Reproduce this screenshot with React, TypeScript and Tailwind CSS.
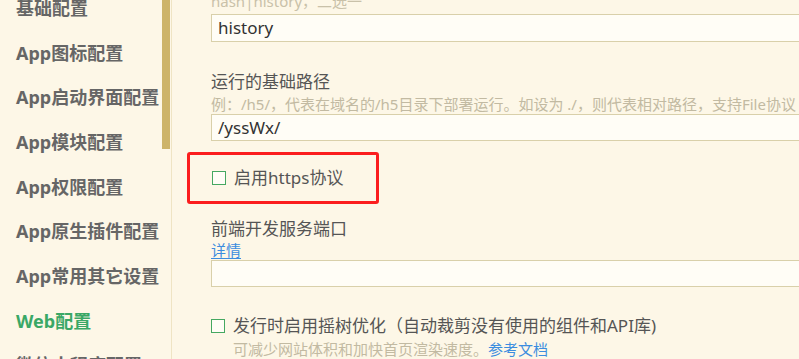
const menu = [
  '基础配置',
  'App图标配置',
  'App启动界面配置',
  'App模块配置',
  'App权限配置',
  'App原生插件配置',
  'App常用其它设置',
  'Web配置',
  '微信小程序配置',
];

function Checkbox() {
  return <span className="w-[14px] h-[14px] border border-[#45a861] bg-[#fffdf6] shrink-0" />;
}

export default function App() {
  return (
    <div
      className="w-[799px] h-[359px] overflow-hidden flex bg-[#fdf7e7]"
      style={{ fontFamily: '"Noto Sans", "Noto Sans CJK SC", sans-serif' }}
    >
      {/* Sidebar */}
      <aside className="w-[172px] shrink-0 flex border-r border-[#efe4c4]">
        <ul className="flex-1 -mt-[14px] pl-4">
          {menu.map((m) => (
            <li
              key={m}
              className={`h-[44.7px] flex items-center text-[18px] font-bold whitespace-nowrap ${
                m === 'Web配置' ? 'text-[#3aa866]' : 'text-[#666]'
              }`}
            >
              {m}
            </li>
          ))}
        </ul>
        <div className="w-[8px] mr-[1px]">
          <div className="h-[149px] bg-[#cdb46a]" />
        </div>
      </aside>

      {/* Content */}
      <main className="flex-1 pl-[39px] -mt-[9px] flex flex-col text-[#555]">
        <p className="text-[15px] text-[#c9c1a9] leading-[20px] whitespace-nowrap">hash|history，二选一</p>
        <div className="w-[620px] h-[28px] mt-[3px] border border-[#d9d0aa] bg-[#fffdf6] px-[6px] flex items-center text-[17px] text-[#333]">
          history
        </div>

        <p className="mt-[28px] text-[17px] leading-[24px]">运行的基础路径</p>
        <p className="text-[15px] text-[#c2baa2] leading-[20px] whitespace-nowrap">
          例：/h5/，代表在域名的/h5目录下部署运行。如设为 ./，则代表相对路径，支持File协议
        </p>
        <div className="w-[620px] h-[28px] border border-[#d9d0aa] bg-[#fffdf6] px-[6px] flex items-center text-[17px] text-[#333]">
          /yssWx/
        </div>

        <div className="mt-[11px] -ml-[24px] w-[192px] h-[54px] border-[3px] border-[#fb1e1e] rounded-[3px] flex items-center gap-[8px] pl-[22px]">
          <Checkbox />
          <span className="text-[17px]">启用https协议</span>
        </div>

        <p className="mt-[13px] text-[17px] leading-[24px]">前端开发服务端口</p>
        <a className="text-[15px] leading-[18px] text-[#3c8ddf] underline underline-offset-2 w-fit">详情</a>
        <div className="w-[620px] h-[28px] mt-[1px] border border-[#d9d0aa] bg-[#fffdf6]" />

        <div className="mt-[27px] h-[24px] flex items-center gap-[8px] whitespace-nowrap">
          <Checkbox />
          <span className="text-[17px]">发行时启用摇树优化（自动裁剪没有使用的组件和API库)</span>
        </div>
        <p className="mt-[1px] pl-[22px] text-[15px] leading-[20px] text-[#c2baa2] whitespace-nowrap">
          可减少网站体积和加快首页渲染速度。<a className="text-[#3c8ddf]">参考文档</a>
        </p>
      </main>
    </div>
  );
}
